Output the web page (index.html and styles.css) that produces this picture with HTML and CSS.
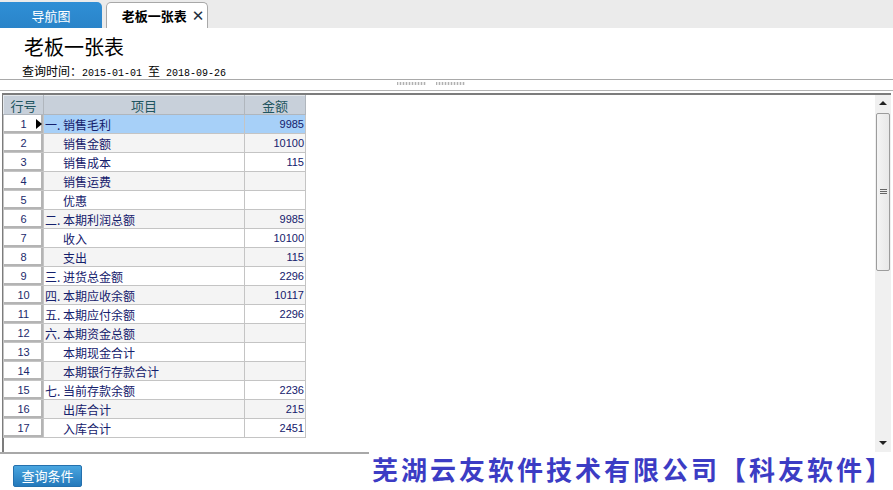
FILE: index.html
```html
<!DOCTYPE html>
<html lang="zh">
<head>
<meta charset="utf-8">
<title>老板一张表</title>
<link rel="stylesheet" href="styles.css">
</head>
<body>
<div class="page">
  <div class="tabbar">
    <div class="tab nav">导航图</div>
    <div class="tab active"><span>老板一张表</span><span class="close">✕</span></div>
  </div>
  <div class="head">
    <div class="title">老板一张表</div>
    <div class="sub">查询时间：<span class="mono">2015-01-01</span><span class="to">至</span><span class="mono">2018-09-26</span></div>
  </div>
  <div class="splitter"><span class="grip"></span><span class="grip"></span></div>
  <div class="gridbox">
    <div class="gridscroll">
      <table class="grid">
        <colgroup><col class="c1"><col class="c2"><col class="c3"></colgroup>
        <thead><tr><th>行号</th><th>项目</th><th>金额</th></tr></thead>
        <tbody>
          <tr class="sel"><td class="rn">1<span class="ind"></span></td><td><span class="pre">一.</span>销售毛利</td><td class="amt">9985</td></tr>
          <tr class="alt"><td class="rn">2</td><td class="sub2">销售金额</td><td class="amt">10100</td></tr>
          <tr><td class="rn">3</td><td class="sub2">销售成本</td><td class="amt">115</td></tr>
          <tr class="alt"><td class="rn">4</td><td class="sub2">销售运费</td><td class="amt"></td></tr>
          <tr><td class="rn">5</td><td class="sub2">优惠</td><td class="amt"></td></tr>
          <tr class="alt"><td class="rn">6</td><td><span class="pre">二.</span>本期利润总额</td><td class="amt">9985</td></tr>
          <tr><td class="rn">7</td><td class="sub2">收入</td><td class="amt">10100</td></tr>
          <tr class="alt"><td class="rn">8</td><td class="sub2">支出</td><td class="amt">115</td></tr>
          <tr><td class="rn">9</td><td><span class="pre">三.</span>进货总金额</td><td class="amt">2296</td></tr>
          <tr class="alt"><td class="rn">10</td><td><span class="pre">四.</span>本期应收余额</td><td class="amt">10117</td></tr>
          <tr><td class="rn">11</td><td><span class="pre">五.</span>本期应付余额</td><td class="amt">2296</td></tr>
          <tr class="alt"><td class="rn">12</td><td><span class="pre">六.</span>本期资金总额</td><td class="amt"></td></tr>
          <tr><td class="rn">13</td><td class="sub2">本期现金合计</td><td class="amt"></td></tr>
          <tr class="alt"><td class="rn">14</td><td class="sub2">本期银行存款合计</td><td class="amt"></td></tr>
          <tr><td class="rn">15</td><td><span class="pre">七.</span>当前存款余额</td><td class="amt">2236</td></tr>
          <tr class="alt"><td class="rn">16</td><td class="sub2">出库合计</td><td class="amt">215</td></tr>
          <tr><td class="rn">17</td><td class="sub2">入库合计</td><td class="amt">2451</td></tr>
        </tbody>
      </table>
    </div>
    <div class="vscroll">
      <div class="arrow up"></div>
      <div class="track">
        <div class="thumb"><span class="gripl"></span></div>
      </div>
      <div class="arrow down"></div>
    </div>
  </div>
  <div class="bottom">
    <div class="bleft"><button class="btn">查询条件</button></div>
    <div class="company">芜湖云友软件技术有限公司【科友软件】</div>
  </div>
</div>
</body>
</html>
```
FILE: styles.css
```css
* { box-sizing: border-box; }
html, body { margin: 0; padding: 0; background: #fff; }
body { font-family: "Noto Sans CJK SC", "Liberation Sans", sans-serif; }
.page { width: 893px; height: 490px; overflow: hidden; display: flex; flex-direction: column; }

.tabbar { height: 28px; background: #ebebeb; display: flex; align-items: flex-end; gap: 4px; padding-top: 2px; flex: none; }
.tab { height: 26px; display: flex; align-items: center; justify-content: center; font-size: 13px; }
.tab.nav { width: 102px; background: linear-gradient(#2f8fd6, #2a84c9); color: #fff; border-top-right-radius: 5px; }
.tab.active { width: 102px; background: #fff; border: 1px solid #a8a8a8; border-bottom: none; border-radius: 5px 5px 0 0; font-weight: bold; color: #000; gap: 5px; padding-left: 12px; }
.tab .close { font-size: 15px; font-weight: bold; color: #22303e; font-family: "DejaVu Sans", sans-serif; }

.head { height: 52px; padding: 6px 0 0 22px; flex: none; border-bottom: 1px solid #a9a9a9; }
.title { font-size: 20px; line-height: 26px; color: #000; padding-left: 2px; }
.sub { font-size: 12px; line-height: 14px; margin-top: 4px; color: #000; }
.mono { font-family: "Liberation Mono", monospace; font-size: 10px; }
.to { margin: 0 6px; }

.splitter { height: 11px; flex: none; display: flex; justify-content: center; align-items: center; gap: 10px; border-bottom: 1px solid #b4b4b4; padding-right: 32px; padding-bottom: 3px; }
.grip { width: 29px; height: 3px; background: repeating-linear-gradient(90deg, #b0b0b0 0 1px, #e8e8e8 1px 3px); }

.gridbox { margin-top: 2px; margin-left: 2px; margin-right: 2px; height: 359px; flex: none; border-top: 2px solid #7c7c7c; border-left: 2px solid #7c7c7c; display: flex; }
.gridscroll { flex: 1; }
.grid { border-collapse: collapse; table-layout: fixed; font-size: 12px; color: #14206c; margin-left: -1px; }
.grid col.c1 { width: 40px; }
.grid col.c2 { width: 201px; }
.grid col.c3 { width: 61px; }
.grid th, .grid td { height: 19px; padding: 0; border: 1px solid #c4c4c4; line-height: 17px; white-space: nowrap; }
.grid th { background: #c8d0da; color: #1f5560; font-weight: normal; font-size: 13px; border-color: #e4e8ec #b0b6bd #b0b6bd #e4e8ec; }
.grid td { padding-left: 1px; }
.grid td.rn { background: #fff; text-align: center; padding-left: 0; position: relative; box-shadow: inset -2px -2px 0 #b4b4b4; font-family: "Liberation Sans", sans-serif; font-size: 11px; color: #1b2a6b; }
.grid tr.alt td { background: #f4f4f4; }
.grid tr.alt td.rn { background: #fff; }
.grid tr.sel td { background: #a7d0f8; }
.grid tr.sel td.rn { background: #fff; }
.grid td.sub2 { padding-left: 19px; }
.grid .pre { display: inline-block; width: 18px; }
.grid td.amt { text-align: right; padding-right: 1px; font-family: "Liberation Sans", sans-serif; font-size: 11px; }
.ind { position: absolute; left: 32px; top: 4px; width: 0; height: 0; border-top: 5px solid transparent; border-bottom: 5px solid transparent; border-left: 6px solid #000; }

.vscroll { width: 16px; display: flex; flex-direction: column; background: #f0f0f0; }
.arrow { height: 17px; position: relative; background: #f0f0f0; }
.arrow.up::after { content: ""; position: absolute; left: 4px; top: 6px; border-left: 4px solid transparent; border-right: 4px solid transparent; border-bottom: 4px solid #222; }
.arrow.down::after { content: ""; position: absolute; left: 4px; top: 6px; border-left: 4px solid transparent; border-right: 4px solid transparent; border-top: 4px solid #222; }
.track { flex: 1; padding: 1px 1px; }
.thumb { height: 158px; border: 1px solid #9c9c9c; border-radius: 2px; background: linear-gradient(90deg, #f4f4f4, #e8e8e8); display: flex; align-items: center; justify-content: center; }
.gripl { width: 7px; height: 6px; background: repeating-linear-gradient(#666 0 1px, transparent 1px 2px); }

.bottom { flex: 1; display: flex; }
.bleft { flex: 1; min-width: 0; border-top: 2px solid #a8a8a8; padding: 8px 0 0 13px; }
.btn { width: 69px; height: 22px; border: 1px solid #2470ad; border-radius: 2px; background: linear-gradient(#4aa6e0, #2479bb); color: #fff; font-family: "Noto Sans CJK SC", sans-serif; font-size: 13px; padding: 0; line-height: 18px; }
.company { flex: none; padding: 2px 0 0 3px; margin-right: -1px; font-size: 26px; line-height: 30px; font-weight: bold; color: #3c3cc4; letter-spacing: 3px; white-space: nowrap; }
```
